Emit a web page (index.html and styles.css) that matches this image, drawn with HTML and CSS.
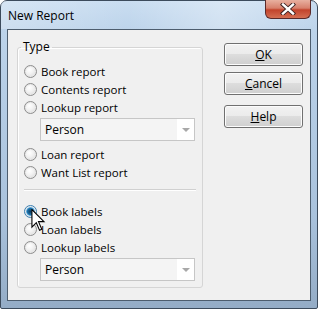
FILE: index.html
```html
<!DOCTYPE html>
<html lang="en">
  <head>
    <meta charset="UTF-8" />
    <title>New Report</title>
    <link rel="stylesheet" href="styles.css">
  </head>
  <body>
    <div class="window">
      <div class="titlebar">
        <span class="title">New Report</span>
        <div class="close">
          <svg width="16" height="12" viewBox="0 0 16 12">
            <path d="M3 1.5 L13 10.5 M13 1.5 L3 10.5" stroke="#3a2020" stroke-width="4.2" stroke-linecap="square" />
            <path d="M3 1.5 L13 10.5 M13 1.5 L3 10.5" stroke="#ffffff" stroke-width="2.4" stroke-linecap="square" />
          </svg>
        </div>
      </div>
      <div class="client">
        <fieldset class="group">
          <legend>Type</legend>
          <label class="option"><input type="radio" name="type" /> Book report</label>
          <label class="option"><input type="radio" name="type" /> Contents report</label>
          <label class="option"><input type="radio" name="type" /> Lookup report</label>
          <div class="combo"><span>Person</span><span class="arrow"></span></div>
          <label class="option gap"><input type="radio" name="type" /> Loan report</label>
          <label class="option"><input type="radio" name="type" /> Want List report</label>
          <hr class="sep" />
          <label class="option"><input type="radio" name="type" checked /> Book labels</label>
          <label class="option"><input type="radio" name="type" /> Loan labels</label>
          <label class="option"><input type="radio" name="type" /> Lookup labels</label>
          <div class="combo"><span>Person</span><span class="arrow"></span></div>
        </fieldset>
        <div class="buttons">
          <button type="button"><u>O</u>K</button>
          <button type="button"><u>C</u>ancel</button>
          <button type="button" class="help"><u>H</u>elp</button>
        </div>
      </div>
      <svg class="cursor" width="15" height="23" viewBox="0 0 13 21">
        <path d="M0.5 0.5 L0.5 16.5 L4.5 12.5 L7.5 19.5 L9.5 18.5 L6.5 11.5 L11.5 11.5 Z" fill="#ffffff" stroke="#000000" stroke-width="1" />
      </svg>
    </div>
  </body>
</html>
```

FILE: styles.css
```css
body {
  margin: 0;
  font-family: "Open Sans", "Noto Sans", sans-serif;
  font-size: 11.5px;
  color: #000000;
  background: #ffffff;
}
.window {
  position: relative;
  width: 318px;
  height: 309px;
  box-sizing: border-box;
  border: 1px solid #3c4b5c;
  border-radius: 7px 7px 2px 2px;
  background: linear-gradient(180deg, #c9ddf1 0%, #bcd3ea 10%, #a9c2dc 70%, #94acc6 100%);
  padding: 0 6px 7px 6px;
  display: flex;
  flex-direction: column;
}
.titlebar {
  height: 28px;
  display: flex;
  align-items: flex-start;
  justify-content: space-between;
  background: linear-gradient(90deg, rgba(255,255,255,0.25), rgba(255,255,255,0) 40%, rgba(255,255,255,0.3) 70%, rgba(255,255,255,0));
  margin: 0 -6px;
  padding: 0 6px;
}
.title {
  margin-top: 6px;
  margin-left: 1px;
  font-size: 12px;
}
.close {
  width: 46px;
  height: 19px;
  margin-top: -1px;
  margin-right: 0;
  box-sizing: border-box;
  border: 1px solid #5a2a2a;
  border-top: none;
  border-radius: 0 0 6px 6px;
  background: linear-gradient(180deg, #e8b0a0 0%, #d7806c 45%, #c2432c 55%, #d46e52 100%);
  display: flex;
  align-items: center;
  justify-content: center;
}
.client {
  flex: 1;
  box-sizing: border-box;
  border: 1px solid #4d5d6e;
  background: #f0f0f0;
  display: flex;
  align-items: flex-start;
  padding: 9px 0 0 9px;
}
.group {
  margin: 0;
  width: 186px;
  box-sizing: border-box;
  border: 1px solid #d5d5d5;
  border-radius: 3px;
  box-shadow: inset 1px 1px 0 #ffffff;
  padding: 0 0 6px 6px;
  display: flex;
  flex-direction: column;
}
.group legend {
  padding: 0 2px;
  margin-left: -3px;
  line-height: 16px;
  font-size: 12px;
}
.option {
  display: flex;
  align-items: center;
  height: 18px;
  white-space: nowrap;
}
.option:first-of-type {
  margin-top: 7px;
}
.option.gap {
  margin-top: 4px;
}
.option input {
  appearance: none;
  width: 13px;
  height: 13px;
  margin: 0 4px 0 0;
  border: 1px solid #8d8d8d;
  border-radius: 50%;
  box-sizing: border-box;
  background: radial-gradient(circle at 40% 35%, #ffffff 0%, #f2f2f2 40%, #d4d4d4 100%);
  box-shadow: inset 0 0 0 1px #e8e8e8;
}
.option input:checked {
  border-color: #3c7fb1;
  background: radial-gradient(circle at 50% 50%, #0b3a5e 0%, #1b6fa8 40%, #6fb6e4 55%, #e8f4fc 62%, #cfe6f5 100%);
}
.combo {
  display: flex;
  align-items: center;
  width: 155px;
  height: 23px;
  margin: 2px 0 0 16px;
  box-sizing: border-box;
  border: 1px solid #c6c6c6;
  background: #f4f4f4;
}
.combo span:first-child {
  flex: 1;
  padding-left: 4px;
  font-size: 12px;
}
.combo .arrow {
  width: 17px;
  height: 21px;
  background: #ffffff;
  position: relative;
}
.combo .arrow::after {
  content: "";
  position: absolute;
  left: 5px;
  top: 9px;
  border-left: 4px solid transparent;
  border-right: 4px solid transparent;
  border-top: 4px solid #a8a8a8;
}
.sep {
  width: 172px;
  margin: 8px 0 11px 0;
  border: none;
  border-top: 1px solid #d0d0d0;
  border-bottom: 1px solid #ffffff;
}
.buttons {
  display: flex;
  flex-direction: column;
  margin-left: 21px;
  margin-top: 4px;
}
.buttons button {
  width: 79px;
  height: 23px;
  margin-bottom: 6px;
  border: 1px solid #707070;
  border-radius: 3px;
  font-family: inherit;
  font-size: 12px;
  color: #000000;
  background: linear-gradient(180deg, #f2f2f2 0%, #ebebeb 49%, #dddddd 50%, #cfcfcf 100%);
  box-shadow: inset 0 0 0 1px #fcfcfc;
  padding: 0;
}
.buttons .help {
  margin-top: 4px;
}
.cursor {
  position: absolute;
  left: 30px;
  top: 208px;
}
```
